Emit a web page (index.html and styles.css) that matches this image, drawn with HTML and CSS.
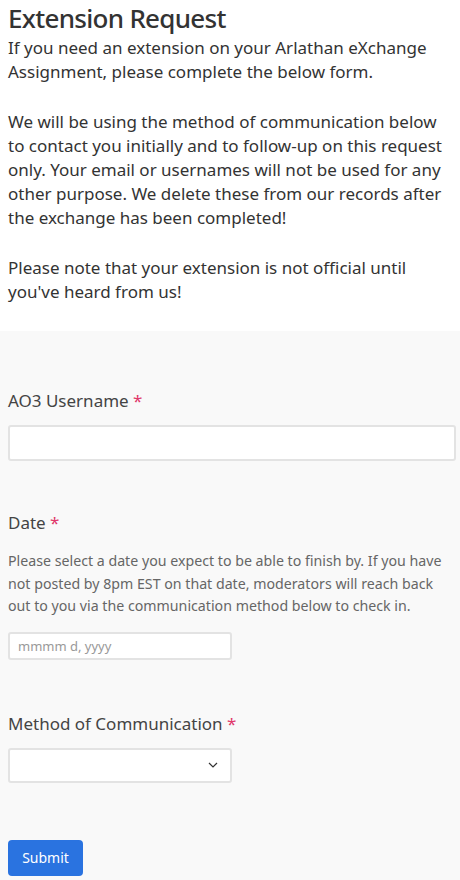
FILE: index.html
```html
<!DOCTYPE html>
<html>
<head>
<meta charset="utf-8">
<link rel="stylesheet" href="styles.css">
</head>
<body>
<div class="intro">
  <h1 class="title">Extension Request</h1>
  <p class="para">If you need an extension on your Arlathan eXchange Assignment, please complete the below form.</p>
  <p class="para">We will be using the method of communication below to contact you initially and to follow-up on this request only. Your email or usernames will not be used for any other purpose. We delete these from our records after the exchange has been completed!</p>
  <p class="para">Please note that your extension is not official until you've heard from us!</p>
</div>
<form class="form">
  <div class="field">
    <label class="label">AO3 Username <span class="req">*</span></label>
    <input class="input input-wide" type="text">
  </div>
  <div class="field field-date">
    <label class="label">Date <span class="req">*</span></label>
    <p class="help">Please select a date you expect to be able to finish by. If you have not posted by 8pm EST on that date, moderators will reach back out to you via the communication method below to check in.</p>
    <input class="input input-date" type="text" placeholder="mmmm d, yyyy">
  </div>
  <div class="field">
    <label class="label">Method of Communication <span class="req">*</span></label>
    <div class="select">
      <svg class="chev" width="10" height="6" viewBox="0 0 10 6"><path d="M1 1l4 4 4-4" fill="none" stroke="#333" stroke-width="1.2"/></svg>
    </div>
  </div>
  <button class="submit" type="button">Submit</button>
</form>
</body>
</html>
```
FILE: styles.css
```css
html, body { margin: 0; padding: 0; }
body {
  font-family: "Noto Sans", "Open Sans", sans-serif;
  color: #333;
  background: #f9f9f9;
}
.intro {
  background: #fff;
  padding: 0 8px 27px;
}
.title {
  margin: 0;
  font-size: 26px;
  font-weight: 500;
  letter-spacing: -0.7px;
  line-height: 36px;
  color: #333;
}
.para {
  margin: 0 0 26px;
  font-size: 17px;
  line-height: 24px;
}
.para:last-child { margin-bottom: 0; }
.form {
  padding: 58px 4px 4px 8px;
}
.field { margin-bottom: 50px; }
.field-date { margin-bottom: 52px; }
.label {
  display: block;
  font-size: 17px;
  line-height: 24px;
  color: #444;
  margin-bottom: 12px;
}
.req { color: #e0386a; }
.help {
  margin: 15px 0 14px;
  font-size: 14.2px;
  line-height: 22.5px;
  color: #666;
}
.input {
  display: block;
  box-sizing: border-box;
  border: 2px solid #e3e3e3;
  border-radius: 3px;
  background: #fff;
  font-family: inherit;
  font-size: 13px;
  padding: 0 8px;
  margin: 0;
}
.input::placeholder { color: #999; }
.input-wide { width: 448px; height: 36px; }
.input-date { width: 224px; height: 28px; }
.select {
  box-sizing: border-box;
  width: 224px;
  height: 35px;
  border: 2px solid #e3e3e3;
  border-radius: 3px;
  background: #fff;
  display: flex;
  align-items: center;
  justify-content: flex-end;
  padding-right: 12px;
}
.submit {
  display: block;
  margin-top: 57px;
  width: 75px;
  height: 36px;
  border: none;
  border-radius: 4px;
  background: #2a73e0;
  color: #fff;
  font-family: inherit;
  font-size: 14px;
}
```
